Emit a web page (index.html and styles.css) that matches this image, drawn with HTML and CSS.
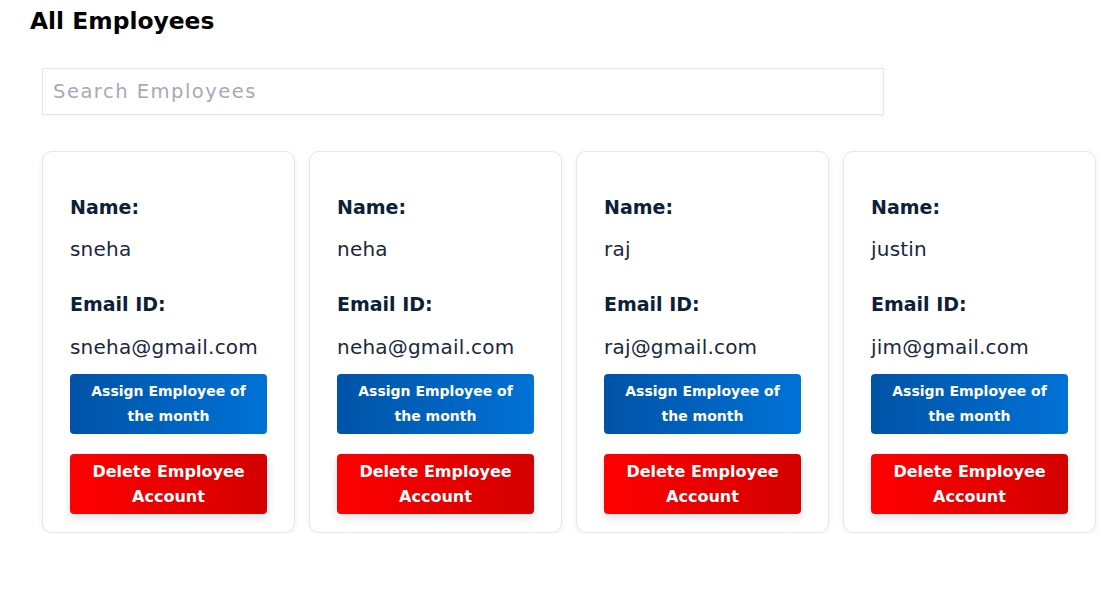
FILE: index.html
```html
<!DOCTYPE html>
<html>
<head>
<meta charset="utf-8">
<link rel="stylesheet" href="styles.css">
</head>
<body>
<div class="page">
  <h1 class="title">All Employees</h1>
  <div class="content">
    <input class="search" type="text" placeholder="Search Employees">
    <div class="cards">
      <div class="card">
        <div class="label">Name:</div>
        <div class="value name">sneha</div>
        <div class="label email-label">Email ID:</div>
        <div class="value email">sneha@gmail.com</div>
        <button class="btn btn-assign">Assign Employee of the month</button>
        <button class="btn btn-delete">Delete Employee Account</button>
      </div>
      <div class="card">
        <div class="label">Name:</div>
        <div class="value name">neha</div>
        <div class="label email-label">Email ID:</div>
        <div class="value email">neha@gmail.com</div>
        <button class="btn btn-assign">Assign Employee of the month</button>
        <button class="btn btn-delete">Delete Employee Account</button>
      </div>
      <div class="card">
        <div class="label">Name:</div>
        <div class="value name">raj</div>
        <div class="label email-label">Email ID:</div>
        <div class="value email">raj@gmail.com</div>
        <button class="btn btn-assign">Assign Employee of the month</button>
        <button class="btn btn-delete">Delete Employee Account</button>
      </div>
      <div class="card">
        <div class="label">Name:</div>
        <div class="value name">justin</div>
        <div class="label email-label">Email ID:</div>
        <div class="value email">jim@gmail.com</div>
        <button class="btn btn-assign">Assign Employee of the month</button>
        <button class="btn btn-delete">Delete Employee Account</button>
      </div>
    </div>
  </div>
</div>
</body>
</html>
```
FILE: styles.css
```css
html, body {
  margin: 0;
  padding: 0;
  background: #ffffff;
}
body {
  font-family: "DejaVu Sans", "Liberation Sans", sans-serif;
  color: #0c1f36;
}
.page {
  padding-left: 30px;
}
.title {
  margin: 6px 0 0;
  font-size: 23.4px;
  line-height: 30px;
  font-weight: bold;
  color: #000000;
}
.content {
  padding-left: 12px;
}
.search {
  display: block;
  box-sizing: border-box;
  margin-top: 32px;
  width: 842px;
  height: 47px;
  border: 1px solid #e6e6e6;
  box-shadow: 0 1px 2px rgba(0, 0, 0, 0.05);
  padding: 0 10px;
  font-family: "DejaVu Sans", sans-serif;
  font-size: 19.5px;
  letter-spacing: 1.5px;
  color: #333;
  outline: none;
}
.search::placeholder {
  color: #a7a9b6;
}
.cards {
  display: flex;
  gap: 14px;
  margin-top: 36px;
}
.card {
  box-sizing: border-box;
  width: 253px;
  flex: none;
  border: 1px solid #e6e6e6;
  border-radius: 10px;
  box-shadow: 0 2px 6px rgba(0, 0, 0, 0.06);
  padding: 43px 27px 18px;
  display: flex;
  flex-direction: column;
}
.label {
  font-size: 19px;
  line-height: 24px;
  font-weight: bold;
  color: #0c2138;
}
.value {
  font-size: 20px;
  line-height: 24px;
  letter-spacing: 0.2px;
  color: #1a2740;
}
.name {
  margin-top: 18px;
}
.email-label {
  margin-top: 31px;
}
.email {
  margin-top: 19px;
}
.btn {
  display: block;
  width: 197px;
  height: 60px;
  border: none;
  border-radius: 4px;
  color: #ffffff;
  font-family: "DejaVu Sans", sans-serif;
  font-weight: bold;
  line-height: 25px;
  padding: 0 12px;
  cursor: pointer;
}
.btn-assign {
  margin-top: 15px;
  font-size: 14px;
  background: linear-gradient(to right, #0053a6, #0072d6);
}
.btn-delete {
  margin-top: 20px;
  font-size: 16px;
  background: linear-gradient(to right, #ff0000, #d40000);
  box-shadow: 0 4px 10px rgba(0, 0, 0, 0.12);
}
```
